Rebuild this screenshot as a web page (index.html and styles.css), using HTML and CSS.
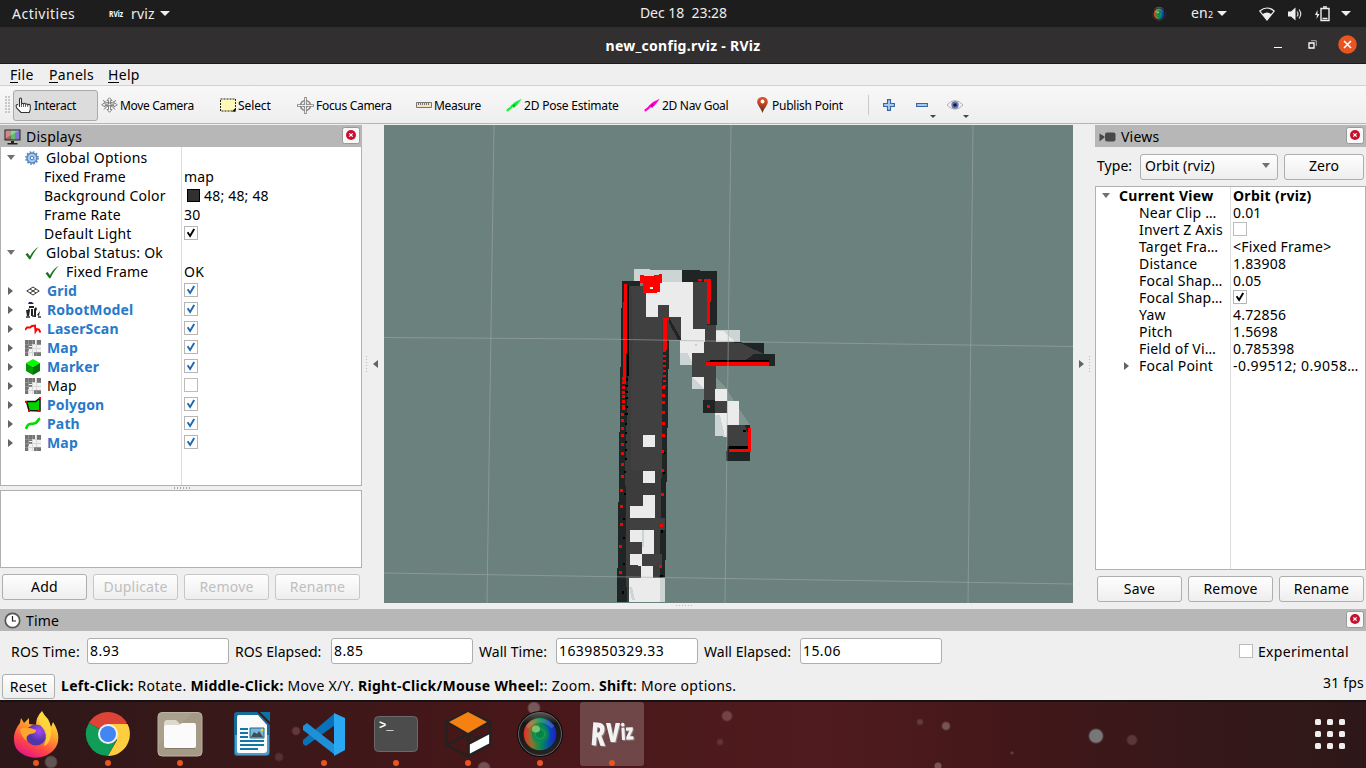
FILE: index.html
```html
<!DOCTYPE html>
<html lang="en">
<head>
<meta charset="utf-8">
<title>new_config.rviz - RViz</title>
<link rel="stylesheet" href="styles.css">
</head>
<body>
<svg class="defs" width="0" height="0">
  <defs>
    <symbol id="tick" viewBox="0 0 14 14"><rect x=".5" y=".5" width="13" height="13" fill="#fff" stroke="#b6b6b6"/><path d="M3.600 6.200 6.100 10 10.200 3" fill="none" stroke="currentColor" stroke-width="1.900"/></symbol>
    <symbol id="box" viewBox="0 0 14 14"><rect x=".5" y=".5" width="13" height="13" fill="#fff" stroke="#bcbcbc"/></symbol>
    <symbol id="ok" viewBox="0 0 16 16"><path d="M1.500 9.300 3.600 8 6 11.200C8 7 11 3.800 14.700 1.700 11.500 5.200 8.500 9.500 6.500 14.300L5.200 14.300Z" fill="#1b741f"/></symbol>
    <symbol id="mapicon" viewBox="0 0 16 16" shape-rendering="crispEdges"><path d="M0 0h16v16H0z" fill="#f2f2f2"/><path d="M0 0h10v4H7v3H4v4H3v5H0zM12 0h4v5h-4zM9 12h7v4H9zM4 9h3v-3H4z" fill="#747474"/><path d="M3.500 0v16M7.500 0v16M11.500 0v16M0 4.500h16M0 8.500h16M0 12.500h16" stroke="#b5b5b5" stroke-opacity=".45" fill="none"/></symbol>
    <symbol id="close" viewBox="0 0 18 17"><rect x=".5" y=".5" width="17" height="16" rx="2" fill="#f8f8f8" stroke="#999"/><circle cx="9" cy="8" r="5" fill="#c8102e"/><path d="m7.300 6.300 3.400 3.400m0-3.400L7.300 9.700" stroke="#fff" stroke-width="1.200"/></symbol>
    <symbol id="arrow" viewBox="0 0 16 14"><path d="M.8 12.800 8 7" stroke="currentColor" stroke-width="2.200" fill="none"/><path d="m4 8.500 5-4.500L15.800.8 11.500 6.500 8 10 6.500 8Z" fill="currentColor"/><path d="M6.500 7.300 9.500 6 8 9.500" fill="#000" opacity=".35"/></symbol>
    <symbol id="lens" viewBox="0 0 48 48"><circle cx="24" cy="24" r="23" fill="#0b0b0b"/><circle cx="24" cy="24" r="21.500" fill="url(#rim)" stroke="#777" stroke-width=".8"/><circle cx="24" cy="24" r="16.300" fill="url(#hue)"/><circle cx="24" cy="24" r="10" fill="url(#core)"/><circle cx="24" cy="24" r="5" fill="none" stroke="#39a65a" stroke-width=".7"/><ellipse cx="20" cy="19" rx="4" ry="3.500" fill="#b7eb82" opacity=".6"/><path d="M11 17q13-13 26 0" stroke="#fff" stroke-opacity=".15" stroke-width="4" fill="none"/></symbol>
    <radialGradient id="core"><stop stop-color="#05803f"/><stop offset=".6" stop-color="#078a50"/><stop offset="1" stop-color="#0c8a57" stop-opacity=".2"/></radialGradient>
    <linearGradient id="rim" x2="0" y2="1"><stop stop-color="#555"/><stop offset=".25" stop-color="#161616"/><stop offset="1" stop-color="#242424"/></linearGradient>
    <linearGradient id="hue"><stop stop-color="#e72d22"/><stop offset=".25" stop-color="#8b7430"/><stop offset=".5" stop-color="#08904e"/><stop offset=".82" stop-color="#0b43b6"/><stop offset="1" stop-color="#1d1dcd"/></linearGradient>
  </defs>
</svg>
<div class="screen">
  <header class="topbar">
    <span class="activities">Activities</span>
    <svg class="mini-rviz" width="16" height="12" viewBox="0 0 16 12"><text x="0" y="9" class="mini-text" textLength="14" lengthAdjust="spacingAndGlyphs">RViz</text></svg>
    <span class="appname">rviz</span><i class="caret"></i>
    <span class="clock">Dec 18&nbsp; 23:28</span>
    <div class="tray">
      <svg width="16" height="16"><use href="#lens"/></svg>
      <span class="lang">en<small>2</small></span><i class="caret"></i>
      <svg class="wifi" width="16" height="14" viewBox="0 0 16 14"><path d="M.8 4Q8-2 15.200 4L8 13Z" fill="none" stroke="#eee" stroke-width="1.200"/><path d="M3.500 7.200Q8 4 12.500 7.200L8 13Z" fill="#eee"/></svg>
      <svg class="vol" width="16" height="14" viewBox="0 0 16 14"><path d="M1 4.500h3L8.500.5v13L4 9.500H1z" fill="#eee"/><path d="M10 4.500q2 2.500 0 5M12 2.500q3.500 4.500 0 9" fill="none" stroke="#ddd" stroke-width="1.200"/></svg>
      <svg class="bat" width="16" height="16" viewBox="0 0 16 16"><path d="M3.500 4 1 9h2L2.500 13 5.500 8h-2z" fill="#eee"/><path d="M7 2.500h8v12H7z" fill="none" stroke="#eee" stroke-width="1.400"/><path d="M9 1h4M8.500 12.500h5" stroke="#eee" stroke-width="1.400"/></svg>
      <i class="caret last"></i>
    </div>
  </header>
  <div class="titlebar">
    <b>new_config.rviz - RViz</b>
    <div class="winbtns">
      <i class="min"></i>
      <svg width="10" height="10" viewBox="0 0 10 10"><path d="M1 3h5v5H1z" fill="none" stroke="#fff" stroke-width="1.300"/><path d="M3 .7h5.300V6" fill="none" stroke="#aaa"/></svg>
      <svg width="19" height="19" viewBox="0 0 19 19"><circle cx="9.500" cy="9.500" r="9.300" fill="#e95420"/><path d="m6 6 7 7m0-7-7 7" stroke="#fff" stroke-width="1.600"/></svg>
    </div>
  </div>
  <nav class="menubar"><span class="m1"><u>F</u>ile</span><span class="m2"><u>P</u>anels</span><span class="m3"><u>H</u>elp</span></nav>
  <div class="toolbar">
    <i class="grip"></i>
    <div class="tool t1 on"><svg width="17" height="17" viewBox="0 0 17 17"><path d="M4.500 10V2q1-2 2 0v5q1-1.500 2 0 1-1.500 2 .3 1.200-1.300 2 .4 2-1 2.800.8v4l-1 3H6L2 11.500Q-.2 7.500 3 7.500" fill="#fff" stroke="#333" stroke-width="1.100"/><path d="M6.500 6v4M8.500 7v3M10.500 7.500V10M12.700 8v2" stroke="#444" stroke-width=".8"/></svg><span>Interact</span></div>
    <div class="tool t2"><svg width="17" height="16" viewBox="0 0 17 16"><path d="M8.500.7 11 3.500H9.500v3.700H13V5.500l3.300 2.300L13 10V8.500H9.500v4H11l-2.500 2.800L6 12.500h1.500v-4H4V10L.7 7.800 4 5.500v1.700h3.500V3.500H6z" fill="#f4f4f4" stroke="#777" stroke-width=".9"/><path d="M2 3.500q6.500 5 13 0M3 12.500q5.500-8 11 0" fill="none" stroke="#777"/></svg><span>Move Camera</span></div>
    <div class="tool t3"><svg width="16" height="14" viewBox="0 0 16 14"><path d="M.5 1h15v12H.5z" fill="#fff8b6" stroke="#222" stroke-dasharray="2 1"/><path d="M15.500 10v3.500H12z"/></svg><span>Select</span></div>
    <div class="tool t4"><svg width="17" height="17" viewBox="0 0 17 17"><circle cx="8.500" cy="8.500" r="5" fill="none" stroke="#888" stroke-width="1.600"/><circle cx="8.500" cy="8.500" r="2.200" fill="#ddd" stroke="#888"/><path d="M8.500 0v17M0 8.500h17" stroke="#888" stroke-width="2.600"/><path d="M8.500 1v15M1 8.500h15" stroke="#eee"/></svg><span>Focus Camera</span></div>
    <div class="tool t5"><svg width="16" height="8" viewBox="0 0 16 8"><path d="M.5 1.500h15v5H.5z" fill="#f3e6b4" stroke="#777"/><path d="M2.500 2v2M4.500 2v2M6.500 2v2M8.500 2v2M10.500 2v2M12.500 2v2" stroke="#777"/></svg><span>Measure</span></div>
    <div class="tool t6"><svg class="green" width="16" height="14"><use href="#arrow"/></svg><span>2D Pose Estimate</span></div>
    <div class="tool t7"><svg class="magenta" width="16" height="14"><use href="#arrow"/></svg><span>2D Nav Goal</span></div>
    <div class="tool t8"><svg width="11" height="16" viewBox="0 0 11 16"><linearGradient id="pin" x2="0" y2="1"><stop stop-color="#e8562b"/><stop offset=".45" stop-color="#b84426"/><stop offset="1" stop-color="#49341b"/></linearGradient><path d="M5.500 0C2 0 .2 2.300.2 5 .2 8 4 11.500 5.500 16 7 11.500 10.800 8 10.800 5 10.800 2.300 9 0 5.500 0Z" fill="url(#pin)"/><circle cx="5.500" cy="4.500" r="1.900" fill="#fff"/></svg><span>Publish Point</span></div>
    <i class="vsep"></i>
    <svg class="plus" width="12" height="12" viewBox="0 0 12 12"><path d="M4.500.6h3v3.900h3.900v3H7.500v3.900h-3V7.500H.6v-3h3.900z" fill="#a9c9ec" stroke="#3465a4" stroke-width="1.100"/></svg>
    <svg class="minus" width="20" height="20" viewBox="0 0 20 20"><path d="M.6 4.500h10.800v3H.6z" fill="#a9c9ec" stroke="#3465a4" stroke-width="1.100"/><path d="M14 16h6l-3 3z" fill="#444"/></svg>
    <svg class="eye" width="22" height="20" viewBox="0 0 22 20"><path d="M0 6Q8-3 16 6 8 14.500 0 6Z" fill="#f4f4f4" stroke="#b1b1b1"/><circle cx="8" cy="6" r="3.700" fill="#6878b5"/><circle cx="8" cy="6" r="1.800" fill="#111c42"/><path d="M16 16h6l-3 3z" fill="#444"/></svg>
  </div>
  <main class="work">
    <section class="left">
      <div class="dockhead"><svg width="17" height="16" viewBox="0 0 17 16"><path d="M.5.5h16v11H.5z" fill="#222"/><path d="M1.500 1.500h5v9h-5z" fill="#b9575a"/><path d="M6.500 1.500h4.500v9H6.500z" fill="#65b96c"/><path d="M11 1.500h4.500v9H11z" fill="#8177cf"/><path d="m1.500 1.500 14 0-14 8z" fill="#fff" opacity=".3"/><path d="M7 12h3v2h3.500v1.500h-10V14H7z" fill="#222"/></svg><span>Displays</span><svg class="close" width="18" height="17"><use href="#close"/></svg></div>
      <div class="tree dtree">
        <div class="row"><i class="tri open"></i><span class="ico"><svg width="14" height="14" viewBox="0 0 14 14"><circle cx="7" cy="7" r="5" fill="#a9caee" stroke="#5687bd" stroke-width="1.500"/><circle cx="7" cy="7" r="6.100" fill="none" stroke="#5687bd" stroke-width="1.600" stroke-dasharray="1.600 1.600"/><circle cx="7" cy="7" r="1.800" fill="#eef" stroke="#4b7bb4"/></svg></span><span class="name">Global Options</span></div>
        <div class="row sub"><span class="name">Fixed Frame</span><span class="val">map</span></div>
        <div class="row sub"><span class="name">Background Color</span><span class="val"><i class="swatch"></i>48; 48; 48</span></div>
        <div class="row sub"><span class="name">Frame Rate</span><span class="val">30</span></div>
        <div class="row sub"><span class="name">Default Light</span><span class="val"><svg class="ck" width="14" height="14"><use href="#tick"/></svg></span></div>
        <div class="row"><i class="tri open"></i><span class="ico"><svg width="16" height="16"><use href="#ok"/></svg></span><span class="name">Global Status: Ok</span></div>
        <div class="row status"><span class="ico"><svg width="16" height="16"><use href="#ok"/></svg></span><span class="name">Fixed Frame</span><span class="val">OK</span></div>
        <div class="row en"><i class="tri"></i><span class="ico"><svg width="14" height="10" viewBox="0 0 14 10"><path d="M.8 5 7 1l6.200 4L7 9zM4 3l6 4M4 7l6-4" fill="none" stroke="#333"/></svg></span><span class="name">Grid</span><span class="val"><svg class="ck" width="14" height="14"><use href="#tick"/></svg></span></div>
        <div class="row en"><i class="tri"></i><span class="ico"><svg width="16" height="16" viewBox="0 0 16 16"><path d="M4 0h3l2 2H3z" fill="#16246e"/><path d="M4 4h5v2H4zM1 8h2l1-2 1 2-1 6H2zM6 7h2v7H6zM9 7l2-2 1 2-1 2v6H9zM12 13l3-4-1 5z" fill="#222"/><path d="M1 15h4m2-1h3m3 1h3" stroke="#333" stroke-width="1.500"/></svg></span><span class="name">RobotModel</span><span class="val"><svg class="ck" width="14" height="14"><use href="#tick"/></svg></span></div>
        <div class="row en"><i class="tri"></i><span class="ico"><svg width="16" height="12" viewBox="0 0 16 12"><path d="M0 7 2 4.500h3L7 3l3-.5.500 6L12 6l2 .5 1.500 3" fill="none" stroke="#f00" stroke-width="1.900"/></svg></span><span class="name">LaserScan</span><span class="val"><svg class="ck" width="14" height="14"><use href="#tick"/></svg></span></div>
        <div class="row en"><i class="tri"></i><span class="ico"><svg width="16" height="16"><use href="#mapicon"/></svg></span><span class="name">Map</span><span class="val"><svg class="ck" width="14" height="14"><use href="#tick"/></svg></span></div>
        <div class="row en"><i class="tri"></i><span class="ico"><svg width="16" height="16" viewBox="0 0 16 16"><path d="m8 0 7 4-7 4-7-4z" fill="#0f0"/><path d="m1 4 7 4v8l-7-4z" fill="#009a00"/><path d="m15 4-7 4v8l7-4z" fill="#007600"/></svg></span><span class="name">Marker</span><span class="val"><svg class="ck" width="14" height="14"><use href="#tick"/></svg></span></div>
        <div class="row"><i class="tri"></i><span class="ico"><svg width="16" height="16"><use href="#mapicon"/></svg></span><span class="name">Map</span><span class="val"><svg class="ck" width="14" height="14"><use href="#box"/></svg></span></div>
        <div class="row en"><i class="tri"></i><span class="ico"><svg width="16" height="16" viewBox="0 0 16 16"><path d="m1.500 4.500 9 0 4.500-3.500v13L4 13.500z" fill="#00d500" stroke="#111" stroke-width="1.500"/><path d="M0 4h2v2H0zM14 0h2v2h-2zM3 13h2v2H3zM13 13h2v2h-2z" fill="red"/></svg></span><span class="name">Polygon</span><span class="val"><svg class="ck" width="14" height="14"><use href="#tick"/></svg></span></div>
        <div class="row en"><i class="tri"></i><span class="ico"><svg width="16" height="14" viewBox="0 0 16 14"><path d="M1 12C3 5 6 7.500 9 6.500 13 6 12 3 15 1.500" fill="none" stroke="#0d0" stroke-width="2.700"/></svg></span><span class="name">Path</span><span class="val"><svg class="ck" width="14" height="14"><use href="#tick"/></svg></span></div>
        <div class="row en"><i class="tri"></i><span class="ico"><svg width="16" height="16"><use href="#mapicon"/></svg></span><span class="name">Map</span><span class="val"><svg class="ck" width="14" height="14"><use href="#tick"/></svg></span></div>
      </div>
      <div class="hgrip"></div>
      <div class="desc"></div>
      <div class="btns"><button>Add</button><button disabled>Duplicate</button><button disabled>Remove</button><button disabled>Rename</button></div>
    </section>
    <div class="split"><i class="vgrip"></i><i class="tri flip"></i></div>
    <svg class="view" width="689" height="478" viewBox="0 0 689 478">
      <path d="M0 0h689v478H0z" fill="#6b817d"/>
      <g transform="translate(216 130) scale(.33333)" shape-rendering="crispEdges">
        <path d="M102 42h48v3h97v37H102z" fill="#cdd4d4"/>
        <path d="M66 78h54v14h18v94h69L205 400 200 645l-5 395H51l6-395 3-215 3-180z" fill="#1f2525"/>
        <path d="M86 93h38v20h14v73h52l-4 300-1 160-8 394H80l-4-400 8-300z" fill="#3c3c3c"/>
        <path d="M94 93h44v92h36v-35h33v36h36v70h-40l-16-70v460h-94V430l5-180z" fill="#404040"/>
        <path d="M80 92h6v270h-6z" fill="#000"/>
        <path d="M138 92l45-10h100v140h32v72h-36v36h-39V186h-33v-36h-33v35h-36z" fill="#ebebeb"/>
        <path d="M240 293h22l17 34v3h-39z" fill="#cdd4d4"/>
        <path d="M207 190h36v65h-8l-28-50zM246 45l105 3v162h-32V82h-73z" fill="#1f2525"/>
        <path d="M207 186h36v65l-28-50z" fill="#404040"/>
        <path d="M279 80h41v130h28v50h-33v-38h-36z" fill="#404040"/>
        <path d="M348 225h72v37h-72z" fill="#cdd4d4"/><path d="M348 227h20l40 35h-60z" fill="#ebebeb"/>
        <path d="M312 260l180 4v33h33v36H312z" fill="#1f2525"/>
        <path d="M312 260l108 3 72 34h-30l-30 22H320v47h-44v-72h36z" fill="#404040"/>
        <path d="M276 320h72v46h-72zM312 364h36v76h-36z" fill="#404040"/>
        <path d="M330 316h176v6H330z" fill="#000"/>
        <path d="M276 366h36v36h-36z" fill="#cdd4d4"/><path d="M278 366h34v36z" fill="#ebebeb"/>
        <path d="M348 366l33 36v4h-33zM381 405l69 105h-33l-36-72z" fill="#82948f"/>
        <path d="M345 402h36v36h36v72h-36v35l-36-2z" fill="#ebebeb"/>
        <path d="M345 480h15l15 65-30-3z" fill="#cdd4d4"/>
        <path d="M309 436h36v38h-36z" fill="#1f2525"/><path d="M345 438h36v36h-36z" fill="#404040"/>
        <path d="M381 510h69v108h-71z" fill="#1f2525"/><path d="M382 510h52l12 30v35h-64z" fill="#404040"/><path d="M387 573h58v9h-58zM429 525h8v5h-8z"/>
        <path d="M129 540h36v36h-36zM129 648h36v36h-36zM129 720h35v105h-74v-72h39zM90 825h72v72h-36v37l-20-4h-16zM123 933h36v36h-36zM87 969h107v73H87z" fill="#ebebeb"/>
        <path d="M89 788h106v37H89zM90 861h36v36H90zM126 897h60v36h-60z" fill="#404040"/>
        <path d="M181 968h14v73h-14zM126 825h6v50h-6zM87 996h9l9 40h-9z" fill="#cdd4d4"/>
        <path d="M76 505h5v6h-5zM76 532h5v6h-5zM76 558h5v6h-5zM75 582h6v6h-6zM75 610h6v6h-6zM72 648h6v6h-6zM72 715h6v6h-6zM70 790h6v6h-6zM69 846h6v6h-6zM69 924h6v6h-6zM67 1008h6v8h-6zM190 590h6v8h-6zM188 650h6v8h-6zM184 825h5v8h-5zM180 960h8v7h-8zM76 370h7v8h-7zM76 391h7v6h-7zM76 407h7v6h-7zM76 427h7v6h-7zM76 452h7v6h-7zM76 475h7v6h-7z"/>
        <g fill="red">
          <path d="M119 60h12v24h-12zM129 64l52-4v52l-52 3zM178 57h9v27h-9z"/>
          <path d="M71 87h10v120l-3 180h-10l2-180zM190 189h18v7h-8v90h-10zM295 71h10v8h-10zM311 71h22v7l-3 128h-9V80h-10zM319 321h188v11H319zM321 450h9v9h-9zM444 518h9v74h-65v-10h56z"/>
        </g>
        <g fill="none" stroke="red" stroke-width="9"><path d="M71 365 70 460" stroke-dasharray="9 5"/><path d="M195 286 192 400" stroke-dasharray="6 9"/></g>
        <g fill="red"><path d="M65 456h9v9h-9zM64 474h9v9h-9zM64 491h9v9h-9zM64 515h9v9h-9zM63 537h9v9h-9zM63 563h9v9h-9zM63 590h9v9h-9zM62 624h9v9h-9zM62 659h9v9h-9zM60 702h9v9h-9zM60 750h9v9h-9zM59 804h9v9h-9zM57 871h9v9h-9zM57 949h9v9h-9zM187 394h9v9h-9zM187 416h9v9h-9zM187 438h9v9h-9zM187 467h9v9h-9zM186 500h9v9h-9zM186 538h9v9h-9zM184 586h9v9h-9zM183 642h9v9h-9zM182 713h9v9h-9zM180 806h9v9h-9zM178 931h9v9h-9z"/></g>
        <path d="M151 96h7v7h-7z" fill="#fff"/><path d="M285 267h6v6h-6z" fill="#ccc"/>
      </g>
      <path d="M110 0 103 478M347 0 341 478M589 0 584 478M0 212.500 216 214 406 217.500 689 221.500M0 448 216 451.500 689 459" fill="none" stroke="#a0aaa7" stroke-opacity=".58"/>
    </svg>
    <div class="split right-split"><i class="tri"></i><i class="vgrip"></i></div>
    <section class="right">
      <div class="dockhead"><svg width="17" height="12" viewBox="0 0 17 12"><rect x="6" y="1.500" width="10.500" height="9" rx="2" fill="#484848"/><path d="m.5 2.500 5 3v1l-5 4z" fill="#484848"/></svg><span>Views</span><svg class="close" width="18" height="17"><use href="#close"/></svg></div>
      <div class="typerow"><span>Type:</span><div class="combo">Orbit (rviz)<i class="tri open"></i></div><button>Zero</button></div>
      <div class="tree vtree">
        <div class="row cur"><i class="tri open"></i><span class="name">Current View</span><span class="val">Orbit (rviz)</span></div>
        <div class="row"><span class="name">Near Clip …</span><span class="val">0.01</span></div>
        <div class="row"><span class="name">Invert Z Axis</span><span class="val"><svg class="ck" width="14" height="14"><use href="#box"/></svg></span></div>
        <div class="row"><span class="name">Target Fra…</span><span class="val">&lt;Fixed Frame&gt;</span></div>
        <div class="row"><span class="name">Distance</span><span class="val">1.83908</span></div>
        <div class="row"><span class="name">Focal Shap…</span><span class="val">0.05</span></div>
        <div class="row"><span class="name">Focal Shap…</span><span class="val"><svg class="ck" width="14" height="14"><use href="#tick"/></svg></span></div>
        <div class="row"><span class="name">Yaw</span><span class="val">4.72856</span></div>
        <div class="row"><span class="name">Pitch</span><span class="val">1.5698</span></div>
        <div class="row"><span class="name">Field of Vi…</span><span class="val">0.785398</span></div>
        <div class="row fp"><i class="tri"></i><span class="name">Focal Point</span><span class="val">-0.99512; 0.9058…</span></div>
      </div>
      <div class="btns"><button>Save</button><button>Remove</button><button>Rename</button></div>
    </section>
  </main>
  <div class="botgrip"></div>
  <section class="time">
    <div class="dockhead"><svg width="17" height="17" viewBox="0 0 17 17"><circle cx="8.500" cy="8.500" r="7.200" fill="#fff" stroke="#555" stroke-width="1.700"/><path d="M8.500 4v5H12" fill="none" stroke="#222" stroke-width="1.200"/></svg><span>Time</span><svg class="close" width="18" height="17"><use href="#close"/></svg></div>
    <div class="fields">
      <label class="f1">ROS Time:</label><div class="input">8.93</div>
      <label class="f2">ROS Elapsed:</label><div class="input">8.85</div>
      <label class="f3">Wall Time:</label><div class="input">1639850329.33</div>
      <label class="f4">Wall Elapsed:</label><div class="input">15.06</div>
      <svg class="exp" width="14" height="14"><use href="#box"/></svg><span class="explabel">Experimental</span>
    </div>
    <div class="statusbar"><button>Reset</button><p><b>Left-Click:</b> Rotate. <b>Middle-Click:</b> Move X/Y. <b>Right-Click/Mouse Wheel:</b>: Zoom. <b>Shift</b>: More options.</p><span class="fps">31 fps</span></div>
  </section>
  <footer class="dock">
    <div class="app run"><svg width="48" height="48" viewBox="0 0 48 48"><defs><linearGradient id="fx" x1=".8" x2=".3" y2="1"><stop stop-color="#fff44f"/><stop offset=".4" stop-color="#ffa72b"/><stop offset=".72" stop-color="#ff4a42"/><stop offset="1" stop-color="#e31587"/></linearGradient><radialGradient id="fp" cx=".65" cy=".3"><stop stop-color="#a74af5"/><stop offset="1" stop-color="#5036a8"/></radialGradient></defs><path d="M30 1q2 5 6 8 2 4 3 8l2-5q9 14 3 25c-9 14-31 14-40 1C-1 27 4 18 8 13l1-5 3 5 5-5v6l7 1q0-8 6-14" fill="url(#fx)"/><circle cx="24" cy="25" r="10.500" fill="url(#fp)"/><path d="M8 19q7-3 16 1 1 3-6 4-5 2-3 7-6-4-7-12" fill="#ffa52f"/><path d="M30 2q10 10 9 22-1 10-7 12 5-12-3-20-4-8 1-14" fill="#ffd93b" opacity=".8"/></svg></div>
    <div class="app run"><svg width="48" height="48" viewBox="0 0 48 48"><path d="M24 24 4.900 13A22 22 0 0 1 43 13z" fill="#db4437"/><path d="M24 24 4.900 13A22 22 0 0 0 24 46L33 29z" fill="#0f9d58"/><path d="M24 14h19.500A22 22 0 0 1 24 46l9-16z" fill="#ffcd40"/><circle cx="24" cy="24" r="10" fill="#f1f1f1"/><circle cx="24" cy="24" r="8" fill="#4285f4"/></svg></div>
    <div class="app run"><svg width="48" height="48" viewBox="0 0 48 48"><rect x="2" y="2.500" width="44" height="43.500" rx="4" fill="#a49a86" stroke="#bbb4a3"/><path d="M3 34 36 3H6q-3 0-3 3z" fill="#b7ad99" opacity=".35"/><path d="M8 14q0-4 3-4h9l4 4v7H8z" fill="#ddd9cc"/><path d="M8 17q0-2 2-2h13l3-2h12q2 0 2 2v21q0 2-2 2H10q-2 0-2-2z" fill="#fbfbfb"/><path d="M9 38.500h30" stroke="#827a6b"/></svg></div>
    <div class="app"><svg width="48" height="48" viewBox="0 0 48 48"><path d="M9 2h20l13 13v27q0 4-4 4H9q-3 0-3-3V5q0-3 3-3z" fill="#176b9a"/><path d="M7 25h34v17q0 3-3 3H10q-3 0-3-3z" fill="#4c9dc8"/><path d="M11 5h19l9 10v25q0 3-3 3H11q-2 0-2-2V7q0-2 2-2z" fill="#fafafa"/><path d="M32 2h10v10z" fill="#0a73a6"/><path d="M12 19h8M12 23h8M12 27h8M12 31h24M12 35h24M12 39h18" stroke="#1376a9" stroke-width="2"/><path d="M22 18h14v10H22z" fill="#76b7db" stroke="#176b91"/><path d="m23 27 3-5 3 2 2-3 4 6" fill="#3e4f52"/><circle cx="34" cy="20" r="1.500" fill="#fc2"/></svg></div>
    <div class="app run"><svg width="48" height="48" viewBox="0 0 48 48"><path d="M3 30v4l3 2 29-21V3L3 30z" fill="#0871b8"/><path d="M3 16 7 13 35 35v10L3 20z" fill="#1e90d8"/><path d="m34 3 11 5v32l-11 6z" fill="#2aa8f2"/></svg></div>
    <div class="app run"><svg width="48" height="48" viewBox="0 0 48 48"><rect x="2.500" y="6.500" width="43" height="35" rx="4" fill="#4c4c4c" stroke="#6a6a6a"/><text x="7" y="19" class="prompt">&gt;_</text></svg></div>
    <div class="app run"><svg width="48" height="48" viewBox="0 0 48 48"><path d="m2.500 12 21.500-10 22 10v22L24 46 2.500 35zM2.500 35 24 24l22 10M24 24v22M2.500 12 24 24 46 12" fill="none" stroke="#222" stroke-width="2.300"/><path d="m5 12 19-10 19 10-19 11z" fill="#f58113"/><path d="m25 34 21-11v11L25 45z" fill="#fff" stroke="#222" stroke-width="1.700"/></svg></div>
    <div class="app run"><svg width="48" height="48"><use href="#lens"/></svg></div>
    <div class="app run active"><svg width="48" height="48" viewBox="0 0 48 48"><g class="logo"><text x="2" y="35" transform="rotate(4 3 35)" textLength="15" lengthAdjust="spacingAndGlyphs">R</text><text x="18" y="32" class="v" textLength="14" lengthAdjust="spacingAndGlyphs">V</text><text x="33" y="30" class="iz" transform="rotate(-3 33 30)" textLength="13" lengthAdjust="spacingAndGlyphs">iz</text></g></svg></div>
    <svg class="grid" width="30" height="30" viewBox="0 0 30 30"><g fill="#eee"><rect width="6" height="6" rx="1.500"/><rect x="12" width="6" height="6" rx="1.500"/><rect x="24" width="6" height="6" rx="1.500"/><rect y="12" width="6" height="6" rx="1.500"/><rect x="12" y="12" width="6" height="6" rx="1.500"/><rect x="24" y="12" width="6" height="6" rx="1.500"/><rect y="24" width="6" height="6" rx="1.500"/><rect x="12" y="24" width="6" height="6" rx="1.500"/><rect x="24" y="24" width="6" height="6" rx="1.500"/></g></svg>
  </footer>
</div>
</body>
</html>
```
FILE: styles.css
```css
* { box-sizing: border-box; }
body { margin: 0; overflow: hidden; font: 14px/19px "Noto Sans", "Open Sans", sans-serif; letter-spacing: .2px; color: #000; background: #efefef; }
svg { display: block; flex: none; }
.defs { position: absolute; }
.screen { width: 1366px; height: 768px; display: flex; flex-direction: column; }
.screen > * { flex: none; }
i { display: block; flex: none; }

.topbar { height: 27px; background: #1d1d1d; color: #eee; display: flex; align-items: center; position: relative; padding-left: 12px; }
.activities { width: 97px; letter-spacing: .5px; }
.mini-rviz, .active svg { overflow: visible; }
.mini-text { font: 700 9px "Noto Sans", sans-serif; fill: #fff; letter-spacing: 0; }
.appname { margin-left: 6px; width: 29px; }
.caret { border: 5px solid transparent; border-top: 5px solid #eee; border-bottom: 0; }
.clock { position: absolute; left: 0; width: 1367px; text-align: center; letter-spacing: -.03px; top: 3px; }
.tray { margin-left: auto; display: flex; align-items: center; padding-right: 15px; }
.lang { margin-left: 24px; width: 26px; white-space: nowrap; }
.lang small { font-size: 9px; }
.wifi { margin-left: 32px; }
.vol { margin-left: 12px; }
.bat { margin-left: 11px; }
.last { margin-left: 11px; }

.titlebar { height: 37px; background: #322f31; border-bottom: 1px solid #1c1a1b; color: #fff; display: flex; align-items: center; position: relative; }
.titlebar b { width: 100%; text-align: center; letter-spacing: .27px; }
.winbtns { position: absolute; right: 9px; top: 8px; display: flex; align-items: center; }
.min { width: 8px; height: 1px; background: #fff; margin: 5px 26px 0 0; }
.winbtns svg + svg { margin-left: 20px; }

.menubar { height: 22px; display: flex; align-items: center; border-bottom: 1px solid #d0d0d0; padding-left: 10px; letter-spacing: .3px; }
.m1 { width: 39px; }
.m2 { width: 59px; }
.menubar u { text-decoration: none; box-shadow: 0 -1px 0 #000 inset; display: inline-block; height: 17px; line-height: 17px; }

.toolbar { height: 38px; background: linear-gradient(#f8f8f8, #eee); border-bottom: 1px solid #b5b5b5; display: flex; align-items: center; font-size: 12px; letter-spacing: -.2px; padding-top: 1px; }
.grip { width: 5px; height: 18px; margin: 0 3px 0 5px; background: radial-gradient(circle at 1px 1px, #c6c6c6 .7px, transparent 1px) 0 0 / 3px 3px; }
.tool { display: flex; align-items: center; height: 31px; white-space: nowrap; flex: none; }
.tool span { margin-left: 2px; }
.tool.on { border: 1px solid #aaa; border-radius: 3px; background: #dcdcdc; padding-left: 1px; }
.t1 { width: 85px; letter-spacing: -.25px; }
.t2 { width: 118px; padding-left: 3px; letter-spacing: -.35px; }
.t3 { width: 78px; padding-left: 4px; letter-spacing: -.1px; }
.t4 { width: 120px; padding-left: 3px; letter-spacing: -.3px; }
.t5 { width: 92px; padding-left: 2px; letter-spacing: -.3px; }
.t6 { width: 138px; }
.t7 { width: 112px; letter-spacing: -.3px; }
.t8 { width: 112px; padding-left: 1px; letter-spacing: -.23px; }
.t8 span { margin-left: 4px; }
.green { color: #17f03a; }
.magenta { color: #f0c; }
.vsep { width: 1px; height: 20px; background: #c9c9c9; }
.plus { margin-left: 14px; }
.minus { margin: 8px 11px 0 21px; }
.eye { margin-top: 8px; }

.work { height: 480px; display: flex; padding-top: 1px; }
.dockhead { height: 22px; background: #b7b7b7; display: flex; align-items: center; padding: 1px 2px 0 4px; }
.dockhead span { margin-left: 5px; }
.close { margin: -2px 0 0 auto; }
.left { width: 362px; }
.tree { background: #fff; border: 1px solid #b1b1b1; overflow: hidden; }
.row { display: flex; align-items: center; white-space: nowrap; }
.val { display: flex; align-items: center; }
.ck { margin-top: -2px; }
.dtree { height: 339px; padding-top: 1px; border-top: 0; background: linear-gradient(#ddd, #ddd) 180px 0 / 1px 100% no-repeat #fff; }
.dtree .row { height: 19px; }
.dtree .tri { margin: 0 11px 0 7px; }
.dtree .tri.open { margin: 0 8px 0 6px; }
.dtree .ico { width: 18px; display: flex; justify-content: center; }
.dtree .ico + .name { margin-left: 5px; width: 137px; letter-spacing: .25px; }
.sub { padding-left: 43px; }
.sub .name { width: 140px; }
.status { padding-left: 42px; }
.dtree .status .name { width: 118px; }
.swatch { width: 13px; height: 13px; background: #303030; border: 1px solid #000; margin: 0 4px 0 3px; }
.dtree .en .name { color: #2879c9; font-weight: 700; letter-spacing: .15px; }
.en .ck { color: #2068ad; }
.tri { width: 5px; border: 4px solid transparent; border-left: 5px solid #636363; border-right: 0; }
.tri.open { width: 8px; border: 4px solid transparent; border-top: 5px solid #707070; border-bottom: 0; }
.tri.flip { border-left: 0; border-right: 5px solid #636363; }
.hgrip { height: 4px; background: radial-gradient(circle, #aaa .7px, transparent 1px) 173px 0 / 3px 4px; width: 17px; margin-left: 174px; }
.desc { height: 78px; background: #fff; border: 1px solid #b1b1b1; }
.btns { display: flex; gap: 6px; padding: 6px 2px 0; }
button { font: inherit; letter-spacing: inherit; color: #000; height: 26px; width: 85px; padding: 0 0 2px; border: 1px solid #aeaeae; border-radius: 3px; background: linear-gradient(#fefefe, #eee); }
button:disabled { color: #bebebe; border-color: #c7c7c7; }
.split { width: 22px; display: flex; align-items: center; padding: 0 0 2px 3px; }
.vgrip { width: 3px; height: 17px; background: radial-gradient(circle, #bbb .7px, transparent 1px) 0 0 / 3px 3px; }
.flip { margin-left: 5px; }
.right-split { padding-left: 6px; }
.right-split .vgrip { margin-left: 4px; }
.right { width: 271px; }
.typerow { display: flex; align-items: center; height: 39px; padding-left: 2px; letter-spacing: .05px; }
.typerow > span { width: 43px; margin-top: -2px; }
.combo { width: 138px; height: 26px; border: 1px solid #aeaeae; border-radius: 3px; background: linear-gradient(#fefefe, #eee); padding: 0 7px 2px 4px; display: flex; align-items: center; justify-content: space-between; }
.typerow button { width: 80px; margin-left: 6px; }
.vtree { height: 384px; background: linear-gradient(#ddd, #ddd) 134px 0 / 1px 100% no-repeat #fff; }
.vtree .row { height: 17px; padding-left: 43px; }
.vtree .name { width: 94px; }
.vtree .cur { font-weight: 700; padding-left: 6px; letter-spacing: .3px; }
.cur .name { margin-left: 9px; }
.vtree .cur .name { width: 114px; }
.vtree .fp { padding-left: 28px; }
.fp .tri { margin-right: 10px; }
.fp .val { letter-spacing: .43px; }

.botgrip { height: 5px; width: 17px; margin-left: 675px; background: radial-gradient(circle, #bbb .7px, transparent 1px) 0 0 / 3px 3px repeat-x; }
.time { height: 91px; }
.time .close { margin-top: -3px; }
.fields { display: flex; align-items: center; height: 40px; padding-left: 11px; }
.input { width: 142px; height: 26px; border: 1px solid #aeaeae; border-radius: 3px; background: #fff; padding: 2px; letter-spacing: .4px; }
.f1 { width: 76px; }
.f2, .f3, .f4 { padding-left: 6px; letter-spacing: .05px; white-space: nowrap; }
.f2 { width: 102px; }
.f3 { width: 83px; }
.f4 { width: 102px; }
.exp { margin-left: 297px; }
.explabel { margin-left: 5px; letter-spacing: .3px; }
.statusbar { display: flex; padding: 3px 2px 0; white-space: nowrap; }
.statusbar button { width: 53px; height: 25px; padding: 0; }
.statusbar p { margin: 2px 0 0 6px; letter-spacing: .3px; }
.fps { margin: -1px 0 0 auto; }

.dock { height: 68px; border-top: 2px solid #161214; display: flex; position: relative; padding-left: 4px;
  background:
    radial-gradient(circle at 51px 60px, #605453 5px, transparent 7px),
    radial-gradient(circle at 296px 29px, #64393a 3px, transparent 5px),
    radial-gradient(circle at 279px 55px, #543133 3px, transparent 5px),
    radial-gradient(circle at 534px 6px, #77575a 5px, transparent 7px),
    radial-gradient(circle at 484px 66px, #735054 5px, transparent 7px),
    radial-gradient(circle at 727px 14px, #754347 4px, transparent 6px),
    radial-gradient(circle at 720px 40px, #633236 2px, transparent 4px),
    radial-gradient(circle at 920px 20px, #633b3c 2px, transparent 4px),
    radial-gradient(circle at 946px 24px, #785454 3px, transparent 5px),
    radial-gradient(circle at 1096px 34px, #777 6px, transparent 8px),
    radial-gradient(circle at 1132px 38px, #5a383a 4px, transparent 6px),
    radial-gradient(circle at 938px 64px, #785454 3px, transparent 4px),
    radial-gradient(circle at 1012px 51px, #6b3b3b 1px, transparent 2px),
    linear-gradient(90deg, #2d1718, #3a1819 18%, #481719 38%, #501b1e 60%, #431719 74%, #351819 88%, #2e1718); }
.app { width: 64px; height: 64px; margin-right: 8px; padding: 8px; position: relative; border-radius: 3px; }
.active { background: rgba(255, 255, 255, .2); }
.run::after { content: ""; position: absolute; width: 6px; height: 6px; border-radius: 3px; background: #e95420; left: 29px; bottom: 0; }
.prompt { font: 700 12px "Liberation Mono", monospace; fill: #fff; letter-spacing: 0; }
.logo { font: 800 32px "Open Sans", sans-serif; letter-spacing: 0; fill: #f2f2f2; filter: drop-shadow(1px 1px 0 #8d7c7c); }
.logo .v { font-size: 27px; }
.logo .iz { font-size: 22px; }
.grid { margin: 17px 21px 0 auto; }
```
